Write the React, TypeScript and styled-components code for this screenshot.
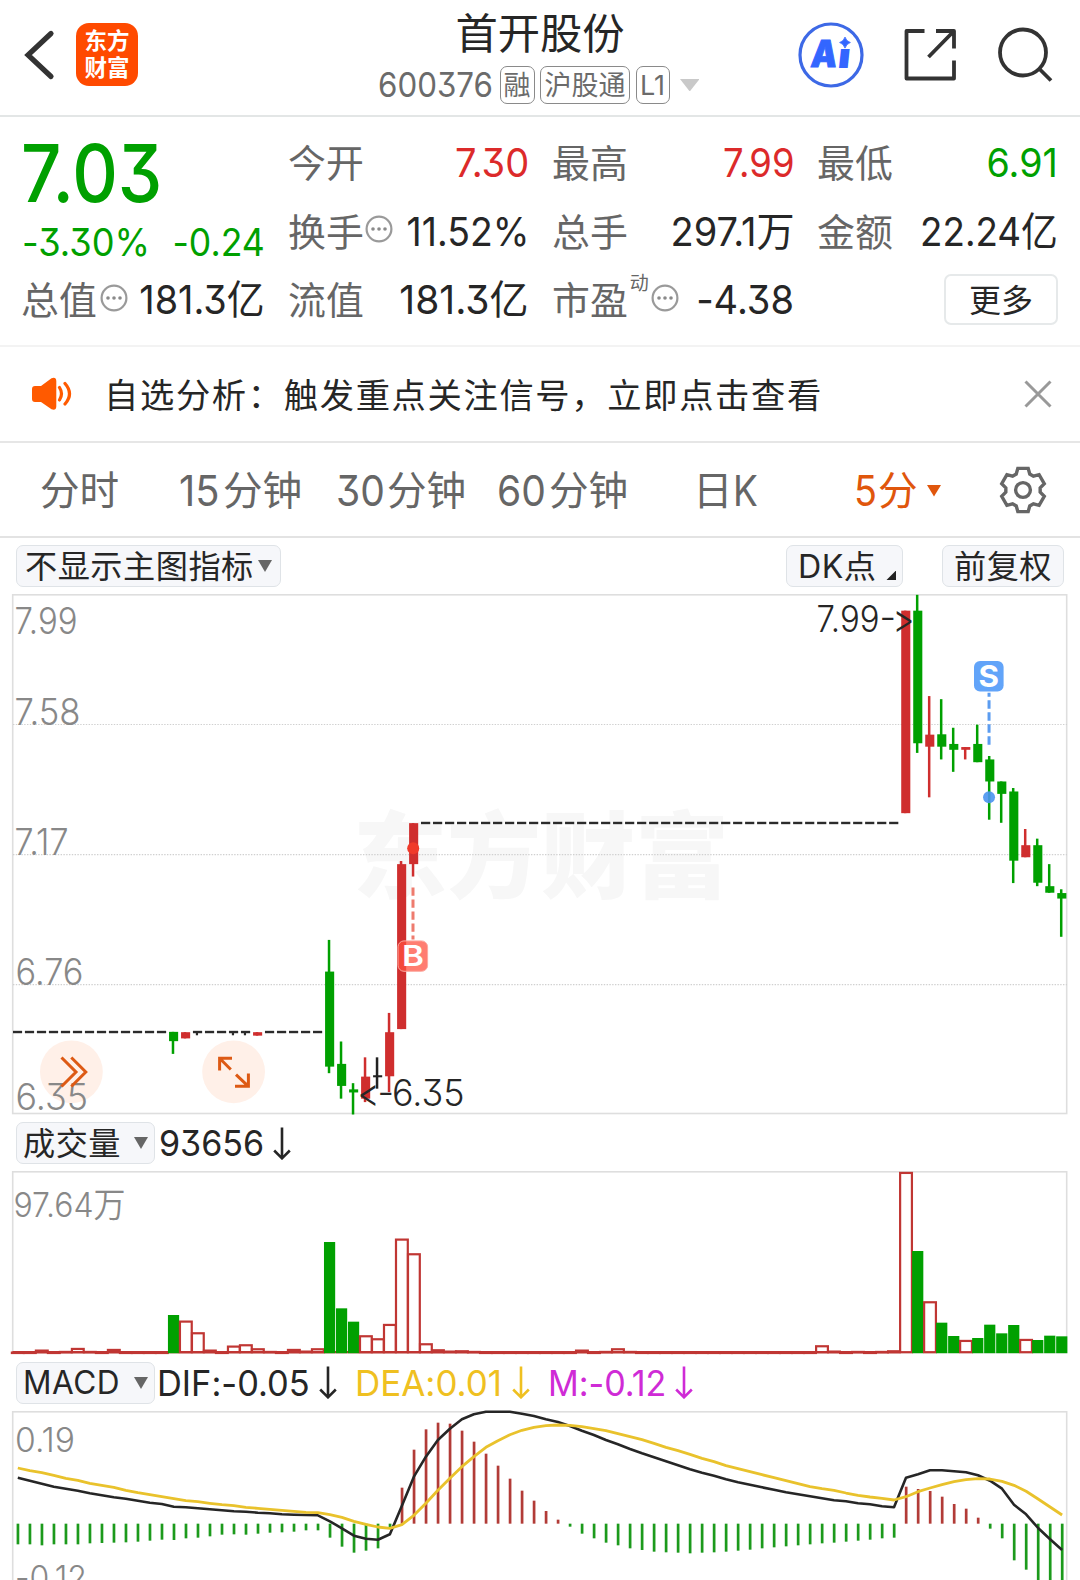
import React from 'react';
import styled, { createGlobalStyle } from 'styled-components';

const GREEN = '#00a000';
const RED = '#dc2a2a';
const CANDLE_RED = '#cf2e2e';
const INK = '#262626';
const FONT = 'Inter, "Noto Sans CJK SC", sans-serif';

const GlobalStyle = createGlobalStyle`
  * { box-sizing: border-box; }
  body {
    margin: 0;
    background: #fff;
    overflow: hidden;
    font-family: ${FONT};
    font-weight: 400;
    font-feature-settings: "cv09", "calt" 0;
    color: ${INK};
  }
  svg { display: block; }
`;

const Page = styled.main`
  width: 1080px;
  height: 1580px;
  overflow: hidden;
  display: flex;
  flex-direction: column;
`;

/* Condensed run of text: drawn narrower than its natural width. */
const Num = styled.span<{ $sx?: number; $w?: number; $right?: boolean }>`
  display: inline-block;
  flex: none;
  white-space: nowrap;
  width: ${(p) => (p.$w ? `${p.$w}px` : 'auto')};
  margin-right: ${(p) => (p.$right ? '-2px' : '0')};
  transform: scaleX(${(p) => p.$sx ?? 0.9});
  transform-origin: ${(p) => (p.$right ? 'right' : 'left')} center;
`;

/* ---------- header ---------- */

const Header = styled.header`
  flex: none;
  height: 117px;
  border-bottom: 2px solid #e3e6e6;
  display: grid;
  grid-template-columns: 378px 324px 1fr;
`;

const HeaderLeft = styled.div`
  height: 109px;
  padding-left: 24px;
  display: flex;
  align-items: center;
  gap: 20px;
`;

const AppLogo = styled.div`
  width: 62px;
  height: 63px;
  border-radius: 13px;
  background: #ff4a00;
  color: #fff;
  font-size: 22.5px;
  font-weight: 700;
  line-height: 27px;
  padding-top: 4px;
  text-align: center;
`;

const HeaderCenter = styled.div`
  display: flex;
  flex-direction: column;
`;

const StockName = styled.h1`
  margin: 0;
  padding-top: 1px;
  height: 66px;
  font-size: 42.3px;
  font-weight: 400;
  line-height: 66px;
  text-align: center;
`;

const CodeRow = styled.div`
  height: 38px;
  display: flex;
  align-items: center;
  color: #6b6b6b;
  font-size: 33.5px;
  line-height: 38px;
`;

const Badge = styled.span<{ $w: number; $gap: number }>`
  width: ${(p) => p.$w}px;
  height: 38px;
  margin-right: ${(p) => p.$gap}px;
  border: 1.5px solid #8a8a8a;
  border-radius: 7px;
  font-size: 27px;
  line-height: 37px;
  text-align: center;
  white-space: nowrap;
`;

const HeaderRight = styled.div`
  height: 109px;
  padding-left: 95px;
  display: flex;
  align-items: center;
  gap: 38px;
`;

/* ---------- quote ---------- */

const Quote = styled.section`
  flex: none;
  height: 230px;
  padding: 12px 24px 0 22px;
  border-bottom: 2px solid #f3f3f3;
  display: grid;
  grid-template-columns: 241px 238px 239px 238px;
  grid-template-rows: repeat(3, 68.5px);
  column-gap: 26px;
`;

const PriceBlock = styled.div`
  grid-row: span 2;
  padding-top: 4px;
  color: ${GREEN};
`;

const Price = styled.div`
  margin-left: -1px;
  font-size: 80px;
  font-weight: 500;
  line-height: 80px;
  height: 80px;
`;

const ChangeRow = styled.div`
  display: flex;
  justify-content: space-between;
  font-size: 38.5px;
  line-height: 58px;
`;

const Cell = styled.div<{ $color?: string }>`
  display: flex;
  align-items: center;
  font-size: 40px;
  line-height: 68px;
  color: ${(p) => p.$color ?? INK};
`;

const Label = styled.span`
  flex: none;
  margin: 0 auto 0 -1px;
  display: flex;
  align-items: center;
  color: #666;
  font-size: 37.9px;
`;

const Sup = styled.sup`
  font-size: 19px;
  line-height: 20px;
  align-self: flex-start;
  margin: 8px -18px 0 2px;
`;

const DotsSvg = styled.svg<{ $shift?: number }>`
  margin: -5px 0 0 ${(p) => p.$shift ?? 1}px;
`;

const MoreButton = styled.button`
  margin: -2px -2px 0 auto;
  width: 114px;
  height: 51px;
  padding: 0;
  border: 2px solid #e6e9ea;
  border-radius: 7px;
  background: #fff;
  color: ${INK};
  font: 400 32px/49px ${FONT};
`;

/* ---------- notice ---------- */

const Notice = styled.section`
  flex: none;
  height: 96px;
  padding: 0 28px 0 31px;
  border-bottom: 2px solid #e6e6e6;
  display: flex;
  align-items: center;
`;

const NoticeText = styled.p`
  margin: 3px auto 0 31px;
  font-size: 34.3px;
  letter-spacing: 1.65px;
  line-height: 90px;
  white-space: nowrap;
`;

/* ---------- tabs ---------- */

const Tabs = styled.nav`
  flex: none;
  height: 95px;
  padding-left: 40px;
  border-bottom: 2px solid #e3e3e3;
  display: grid;
  grid-template-columns: 139px 157px 161px 196px 161px 144px 48px;
  align-items: center;
`;

const Tab = styled.span<{ $active?: boolean }>`
  display: flex;
  align-items: center;
  margin-top: 3px;
  color: ${(p) => (p.$active ? '#e0560c' : '#666')};
  font-size: 39.6px;
  line-height: 90px;
  white-space: nowrap;
`;

const TabDigits = styled(Num)`
  font-size: 42px;
`;

const ChipPad = styled.span`
  width: 9px;
`;

/* ---------- chart bars ---------- */

const Bar = styled.div<{ $h: number; $right?: number }>`
  flex: none;
  height: ${(p) => p.$h}px;
  padding: 0 ${(p) => p.$right ?? 0}px 0 16px;
  display: flex;
  align-items: center;
`;

const Chip = styled.button<{ $w: number; $pad: number; $push?: boolean }>`
  width: ${(p) => p.$w}px;
  height: 42px;
  margin: 0 0 0 ${(p) => (p.$push ? 'auto' : '0')};
  padding: 0 ${(p) => p.$pad}px;
  border: 1.5px solid #dfe3e7;
  border-radius: 7px;
  background: #f6f7fa;
  color: ${INK};
  font: 400 32.2px/40px ${FONT};
  letter-spacing: 0.5px;
  display: flex;
  align-items: center;
  justify-content: space-between;
  white-space: nowrap;
`;

const ChipText = styled.span`
  margin: 2px 0 0 0;
`;

const ChipGap = styled.span`
  width: 39px;
`;

const Corner = styled.svg`
  margin: 18px -5px 0 0;
`;

const Reading = styled.span<{ $color?: string; $ml: number }>`
  display: flex;
  align-items: center;
  margin-top: 2px;
  margin-left: ${(p) => p.$ml}px;
  color: ${(p) => p.$color ?? INK};
  font-size: 35.3px;
  line-height: 42px;
`;

const ArrowSvg = styled.svg<{ $left: number }>`
  margin: -2px 0 0 ${(p) => p.$left}px;
`;

const Panel = styled.svg`
  flex: none;
  width: 1080px;
  overflow: visible;
  font-family: ${FONT};
  font-weight: 360;
`;

/* ---------- small drawings ---------- */

const Dots = ({ shift }: { shift?: number }) => (
  <DotsSvg $shift={shift} width="28" height="28" viewBox="0 0 28 28">
    <circle cx="14" cy="14" r="12.4" fill="none" stroke="#9a9a9a" strokeWidth="2.2" />
    {[8, 14, 20].map((x) => (
      <circle key={x} cx={x} cy="14" r="1.8" fill="#8a8a8a" />
    ))}
  </DotsSvg>
);

const Triangle = ({ w, h, color }: { w: number; h: number; color: string }) => (
  <svg width={w} height={h} viewBox={`0 0 ${w} ${h}`}>
    <path d={`M0 0H${w}L${w / 2} ${h}Z`} fill={color} />
  </svg>
);

const DownArrow = ({ left }: { left: number }) => (
  <ArrowSvg $left={left} width="18" height="33" viewBox="0 0 18 33">
    <path d="M9 0.5V31M1.2 23.5L9 31.3L16.8 23.5" fill="none" stroke="currentColor" strokeWidth="2.6" />
  </ArrowSvg>
);

const gearPath = (() => {
  const pts: string[] = [];
  for (let k = 0; k < 6; k++) {
    for (const [a, r] of [[-23, 17.3], [-13.5, 22.2], [13.5, 22.2], [23, 17.3]]) {
      const t = ((k * 60 + a) * Math.PI) / 180;
      pts.push(`${(25 + r * Math.sin(t)).toFixed(2)} ${(25 - r * Math.cos(t)).toFixed(2)}`);
    }
  }
  return `M${pts.join('L')}Z`;
})();

const Gear = () => (
  <svg width="50" height="50" viewBox="0 0 50 50" fill="none" stroke="#666" strokeWidth="3.4">
    <path d={gearPath} />
    <circle cx="25" cy="25" r="7.4" />
  </svg>
);

/* ---------- chart data ---------- */

const PITCH = 12.003;
const cx = (i: number) => 17.5 + PITCH * i;
const zy = (v: number) => 590 + v / 2.9037;
const vy = (v: number) => 1110 + v / 3;

// [index, colour, high, low, body top, body bottom]
type Candle = [number, string, number, number, number, number];
const G = GREEN;
const R = CANDLE_RED;
const candles: Candle[] = [
  [13, G, 1283, 1347, 1283, 1310],
  [14, R, 1284, 1302, 1284, 1302],
  [20, R, 1284, 1294, 1284, 1294],
  [26, G, 1016, 1403, 1108, 1384],
  [27, G, 1311, 1477, 1376, 1440],
  [28, G, 1432, 1523, 1450, 1459],
  [29, R, 1357, 1487, 1413, 1477],
  [30, '#222', 1357, 1448, 1409, 1415],
  [31, R, 1228, 1458, 1284, 1412],
  [32, R, 787, 1275, 796, 1275],
  [33, R, 677, 832, 677, 796],
  [74, R, 60, 648, 60, 648],
  [75, G, 14, 473, 60, 445],
  [76, R, 308, 602, 420, 455],
  [77, G, 317, 492, 419, 455],
  [78, G, 400, 528, 447, 464],
  [79, R, 456, 492, 456, 464],
  [80, G, 391, 500, 447, 500],
  [81, G, 482, 667, 492, 556],
  [82, G, 556, 676, 556, 592],
  [83, G, 575, 851, 585, 786],
  [84, R, 694, 776, 741, 776],
  [85, G, 722, 860, 741, 850],
  [86, G, 796, 879, 860, 879],
  [87, G, 869, 1007, 880, 896],
];

const range = (a: number, b: number) => Array.from({ length: b - a + 1 }, (_, k) => a + k);
const lowDashes = [...range(0, 12), ...range(15, 19), ...range(21, 25)];
const highDashes = range(34, 73);

const volumeTops: Record<number, number> = {
  2: 720, 4: 724, 5: 715, 6: 724, 8: 718, 13: 615, 14: 633, 15: 668, 16: 720, 18: 708, 19: 704,
  20: 716, 21: 724, 23: 718, 24: 723, 25: 716, 26: 396, 27: 595, 28: 635, 29: 677, 30: 686, 31: 643,
  32: 387, 33: 431, 34: 701, 35: 719, 36: 723, 37: 722, 38: 724, 47: 720, 49: 724, 50: 716, 51: 724,
  67: 707, 68: 723, 70: 724, 72: 724, 73: 722, 74: 187, 75: 423, 76: 575, 77: 638, 78: 678, 79: 691,
  80: 684, 81: 644, 82: 670, 83: 645, 84: 688, 85: 690, 86: 677, 87: 679,
};
const volumeGreen = new Set([13, 26, 27, 28, 75, 77, 78, 80, 81, 82, 83, 85, 86, 87]);

const ZERO = 1241;
const macd = [
  1303, 1303, 1306, 1303, 1303, 1303, 1300, 1299, 1298, 1297, 1295, 1292, 1289, 1290, 1285, 1283, 1279, 1274,
  1273, 1274, 1271, 1268, 1267, 1265, 1261, 1261, 1283, 1310, 1328, 1322, 1315, 1256, 1133, 1019, 958, 938,
  941, 962, 995, 1031, 1067, 1106, 1142, 1172, 1203, 1229, 1250, 1271, 1285, 1298, 1306, 1315, 1320, 1325,
  1327, 1328, 1330, 1328, 1327, 1325, 1322, 1319, 1315, 1312, 1309, 1306, 1303, 1300, 1298, 1295, 1292, 1289,
  1285, 1283, 1130, 1137, 1143, 1160, 1182, 1196, 1223, 1256, 1285, 1351, 1379, 1420, 1440, 1460,
];
const dif = [
  1103, 1112, 1121, 1130, 1136, 1142, 1150, 1156, 1162, 1166, 1172, 1178, 1182, 1190, 1192, 1195, 1198, 1201,
  1204, 1205, 1208, 1210, 1213, 1214, 1215, 1216, 1234, 1255, 1277, 1286, 1289, 1273, 1187, 1100, 1040, 990,
  956, 928, 913, 905, 905, 905, 911, 918, 928, 936, 948, 962, 975, 990, 1003, 1017, 1030, 1042, 1054, 1066,
  1078, 1088, 1097, 1108, 1117, 1124, 1132, 1139, 1147, 1153, 1159, 1165, 1171, 1174, 1180, 1183, 1189, 1192,
  1103, 1093, 1081, 1081, 1084, 1087, 1096, 1112, 1136, 1184, 1213, 1254, 1288, 1320,
];
const dea = [
  1074, 1082, 1088, 1096, 1105, 1111, 1120, 1126, 1132, 1141, 1148, 1154, 1160, 1166, 1172, 1175, 1180, 1184,
  1187, 1192, 1195, 1198, 1201, 1204, 1207, 1208, 1214, 1222, 1234, 1243, 1251, 1255, 1244, 1216, 1180, 1141,
  1105, 1070, 1040, 1012, 992, 974, 961, 952, 947, 945, 946, 950, 956, 962, 971, 980, 989, 1000, 1012, 1022,
  1033, 1045, 1055, 1067, 1076, 1085, 1094, 1103, 1112, 1121, 1130, 1136, 1141, 1149, 1156, 1161, 1165, 1170,
  1160, 1145, 1134, 1124, 1115, 1109, 1106, 1107, 1114, 1126, 1144, 1167, 1191, 1215,
];
const line = (d: number[]) => d.map((v, i) => `${(cx(i) + 0.3).toFixed(1)},${vy(v).toFixed(1)}`).join(' ');

type TxtProps = { x: number; y: number; w: number; size: number; color?: string; children: string; weight?: number };
const Txt = ({ x, y, w, size, color = '#888', children, weight }: TxtProps) => (
  <text x={x} y={y} fontSize={size} fill={color} fontWeight={weight} textLength={w} lengthAdjust="spacingAndGlyphs">
    {children}
  </text>
);

const Frame = ({ top, bottom }: { top: number; bottom: number }) => (
  <rect x="12.7" y={top} width="1054" height={bottom - top} fill="none" stroke="#dedede" strokeWidth="1.6" />
);

/* ---------- panels ---------- */

const PricePanel = () => (
  <Panel height="521" viewBox="0 594 1080 521">
    <text x="353" y="891" fontSize="94" fontWeight="900" fill="#f7f7f7" textLength="376">东方财富</text>
    <Frame top={594.8} bottom={1113.5} />
    {[724.5, 854.6, 984.7].map((y) => (
      <line key={y} x1="13" x2="1067" y1={y} y2={y} stroke="#d0d0d0" strokeWidth="1.2" strokeDasharray="1.4 1.4" />
    ))}
    <circle cx="71.4" cy="1071.8" r="31.4" fill="#fff0e8" />
    <circle cx="233.6" cy="1071.8" r="31.4" fill="#fff0e8" />
    <Txt x={14.5} y={634} w={63} size={37}>7.99</Txt>
    <Txt x={14.5} y={725} w={66} size={37}>7.58</Txt>
    <Txt x={14.5} y={854.6} w={54} size={37}>7.17</Txt>
    <Txt x={15.5} y={984.7} w={68} size={37}>6.76</Txt>
    <Txt x={15.5} y={1110.4} w={72.5} size={37}>6.35</Txt>
    <g fill="none" stroke="#dd5a14" strokeWidth="3">
      <path d="M61.5 1057.5L76 1072L61.5 1086.5M71.3 1057.5L85.8 1072L71.3 1086.5" />
      <path d="M219.6 1070.5V1058.3H232M219.6 1058.3L230.8 1069.5M248.4 1073.6V1086.3H235M248.4 1086.3L236 1074.6" />
    </g>

    {[...lowDashes.map((i) => [i, 1283.5]), ...highDashes.map((i) => [i, 676.5])].map(([i, v]) => (
      <line key={i} x1={Math.max(13, cx(i) - 4.6)} x2={cx(i) + 4.6} y1={zy(v)} y2={zy(v)} stroke="#2b2b2b" strokeWidth="2.4" />
    ))}
    {[15, 18, 19].map((i) => (
      <line key={i} x1={cx(i) - 0.6} x2={cx(i) - 0.6} y1={zy(1283)} y2={zy(1293)} stroke="#2b2b2b" strokeWidth="2.2" />
    ))}
    {candles.map(([i, color, hi, lo, top, bottom]) => (
      <g key={i} fill={color}>
        <rect x={cx(i) - 1.8} y={zy(hi)} width="2.5" height={(lo - hi) / 2.9037} />
        <rect x={cx(i) - 4.5} y={zy(top)} width="9.1" height={(bottom - top) / 2.9037} />
      </g>
    ))}

    <circle cx={cx(33) - 0.4} cy={zy(750)} r="6" fill="#f03a2a" />
    <line x1={cx(33) - 0.6} x2={cx(33) - 0.6} y1={zy(864)} y2={zy(1015)} stroke="#ee7b6e" strokeWidth="3" strokeDasharray="8.3 3.7" />
    <rect x="398" y="940.9" width="29.6" height="30.4" rx="6" fill="#ff4f3f" fillOpacity="0.74" stroke="#fca9a0" strokeWidth="1" />
    <Txt x={402} y={966} w={22} size={28.5} color="#fff" weight={600}>B</Txt>

    <circle cx={cx(81) - 0.7} cy={zy(602)} r="6" fill="#4a94f0" fillOpacity="0.9" />
    <line x1={cx(81) - 0.7} x2={cx(81) - 0.7} y1={zy(449)} y2={zy(298)} stroke="#5b9cf0" strokeWidth="3" strokeDasharray="8.3 3.7" />
    <rect x="974" y="661" width="29.6" height="30.6" rx="6" fill="#62a4f9" />
    <Txt x={978.5} y={686.9} w={20.5} size={30} color="#fff" weight={700}>S</Txt>

    <text y="631.7" fontSize="36.5" fill={INK}>
      <tspan x="816.5" textLength="63" lengthAdjust="spacingAndGlyphs">7.99</tspan>
      <tspan x="879.5" y="629.5">-</tspan>
      <tspan x="892.5" y="632.5" fontSize="40" textLength="22" lengthAdjust="spacingAndGlyphs">&gt;</tspan>
    </text>
    <text fontSize="36.5" fill={INK}>
      <tspan x="357.5" y="1107" fontSize="40" textLength="22" lengthAdjust="spacingAndGlyphs">&lt;</tspan>
      <tspan x="377.5" y="1104.5">-</tspan>
      <tspan x="392" y="1105.5" textLength="72.5" lengthAdjust="spacingAndGlyphs">6.35</tspan>
    </text>
  </Panel>
);

const VolumePanel = () => (
  <Panel height="183" viewBox="0 1171 1080 183">
    <Frame top={1171.8} bottom={1352.6} />
    <Txt x={13.5} y={1216.7} w={112} size={34.5}>97.64万</Txt>
    <line x1="12.5" x2="899" y1="1352.2" y2="1352.2" stroke="#c03633" strokeWidth="2.2" />
    {range(0, 87).map((i) => {
      const top = vy(volumeTops[i] ?? 726);
      if (volumeGreen.has(i)) {
        return <rect key={i} x={cx(i) - 5.6} y={top} width="11.2" height={1353.2 - top} fill={GREEN} />;
      }
      return (
        <rect
          key={i}
          x={cx(i) - 5.6}
          y={top + 0.6}
          width="11.8"
          height={Math.max(0.4, 1351.6 - top)}
          fill="none"
          stroke="#c03633"
          strokeWidth="2.2"
        />
      );
    })}
  </Panel>
);

const MacdPanel = () => (
  <Panel height="169" viewBox="0 1411 1080 169">
    <Frame top={1411.8} bottom={1600} />
    <Txt x={15} y={1451.7} w={60} size={34}>0.19</Txt>
    <Txt x={15} y={1590} w={72} size={34}>-0.12</Txt>
    {macd.map((v, i) => (
      <rect
        key={i}
        x={cx(i) - 0.9}
        y={vy(Math.min(v, ZERO))}
        width="2.7"
        height={Math.abs(v - ZERO) / 3}
        fill={v > ZERO ? '#1c9a1c' : '#b23b37'}
      />
    ))}
    <polyline points={line(dif)} fill="none" stroke="#262626" strokeWidth="2.6" strokeLinejoin="round" />
    <polyline points={line(dea)} fill="none" stroke="#e9c22c" strokeWidth="2.8" strokeLinejoin="round" />
  </Panel>
);

export default function App() {
  return (
    <Page>
      <GlobalStyle />
      <Header>
        <HeaderLeft>
          <svg width="32" height="52" viewBox="0 0 32 52">
            <path d="M27 4.5L4 26L27 47.5" fill="none" stroke="#333" strokeWidth="5.2" strokeLinecap="round" />
          </svg>
          <AppLogo>东方<br />财富</AppLogo>
        </HeaderLeft>
        <HeaderCenter>
          <StockName>首开股份</StockName>
          <CodeRow>
            <Num $w={121.5} $sx={0.935}>600376</Num>
            <Badge $w={35} $gap={5.5}>融</Badge>
            <Badge $w={90} $gap={5.5}>沪股通</Badge>
            <Badge $w={34} $gap={10}>L1</Badge>
            <Triangle w={19.5} h={12.5} color="#c9c9c9" />
          </CodeRow>
        </HeaderCenter>
        <HeaderRight>
          <svg width="68" height="68" viewBox="797 20.5 68 68">
            <circle cx="831" cy="54.5" r="31" fill="none" stroke="#3d69e6" strokeWidth="3.2" />
            <g fill="#3366ff" fontSize="37" fontWeight="900" transform="translate(831 66) skewX(-6)">
              <text x="-21" y="0" textLength="26" lengthAdjust="spacingAndGlyphs" stroke="#3366ff" strokeWidth="1">A</text>
              <text x="6" y="1.5" textLength="13" lengthAdjust="spacingAndGlyphs">i</text>
            </g>
            <rect x="837" y="35" width="16" height="13.5" fill="#fff" />
            <path d="M845 36.6Q846.3 40.9 850.4 42Q846.3 43.3 845 47.6Q843.7 43.3 839.6 42Q843.7 40.9 845 36.6Z" fill="#3366ff" stroke="#3366ff" strokeWidth="0.8" />
          </svg>
          <svg width="54" height="56" viewBox="903 27 54 56" fill="none" stroke="#333" strokeWidth="3.8">
            <path d="M924.5 31H906.5V78.5H954V60.5M936 31H954V48.5M928.5 57L953 32" strokeLinejoin="round" />
          </svg>
          <svg width="58" height="58" viewBox="995.5 25.5 58 58" fill="none" stroke="#333" strokeWidth="3.8">
            <circle cx="1023.5" cy="52" r="23" />
            <path d="M1039.5 68L1051.5 80" />
          </svg>
        </HeaderRight>
      </Header>

      <Quote>
        <PriceBlock>
          <Price><Num $sx={0.885}>7.03</Num></Price>
          <ChangeRow>
            <Num $sx={0.94}>-3.30%</Num>
            <Num $sx={0.925} $right>-0.24</Num>
          </ChangeRow>
        </PriceBlock>
        <Cell $color={RED}><Label>今开</Label><Num $right $sx={0.95}>7.30</Num></Cell>
        <Cell $color={RED}><Label>最高</Label><Num $right $sx={0.91}>7.99</Num></Cell>
        <Cell $color={GREEN}><Label>最低</Label><Num $right $sx={0.94}>6.91</Num></Cell>
        <Cell><Label>换手<Dots /></Label><Num $right $sx={0.935}>11.52%</Num></Cell>
        <Cell><Label>总手</Label><Num $right $sx={0.95}>297.1万</Num></Cell>
        <Cell><Label>金额</Label><Num $right $sx={0.92}>22.24亿</Num></Cell>
        <Cell><Label>总值<Dots shift={3} /></Label><Num $right $sx={0.945}>181.3亿</Num></Cell>
        <Cell><Label>流值</Label><Num $right $sx={0.975}>181.3亿</Num></Cell>
        <Cell><Label>市盈<Sup>动</Sup><Dots shift={20} /></Label><Num $right $sx={0.95}>-4.38</Num></Cell>
        <Cell><MoreButton>更多</MoreButton></Cell>
      </Quote>

      <Notice>
        <svg width="42" height="34" viewBox="31 377 42 34">
          <path d="M35 386H41L51.5 378.3Q56 376.5 56.3 381V406.5Q56 411 51.5 409.3L41 402H35Q32 402 32 399V389Q32 386 35 386Z" fill="#ff5a00" />
          <path d="M59.5 387.5Q63.5 393.7 59.5 400M65 383.5Q74 393.7 65 404" fill="none" stroke="#ff5a00" strokeWidth="3.2" strokeLinecap="round" />
        </svg>
        <NoticeText>自选分析：触发重点关注信号，立即点击查看</NoticeText>
        <svg width="28" height="28" viewBox="0 0 28 28">
          <path d="M1.5 1.5L26.5 26.5M26.5 1.5L1.5 26.5" stroke="#999" strokeWidth="3" />
        </svg>
      </Notice>

      <Tabs>
        <Tab>分时</Tab>
        <Tab><TabDigits $w={44} $sx={0.95}>15</TabDigits>分钟</Tab>
        <Tab><TabDigits $w={51} $sx={0.93}>30</TabDigits>分钟</Tab>
        <Tab><TabDigits $w={52} $sx={0.93}>60</TabDigits>分钟</Tab>
        <Tab>日<TabDigits $sx={0.88}>K</TabDigits></Tab>
        <Tab $active>
          <TabDigits $w={24} $sx={0.9}>5</TabDigits>分<ChipPad /><Triangle w={14} h={11.5} color="#e0560c" />
        </Tab>
        <Gear />
      </Tabs>

      <Bar $h={56} $right={16}>
        <Chip $w={264.5} $pad={8}><ChipText>不显示主图指标</ChipText><Triangle w={14} h={12} color="#666" /></Chip>
        <Chip $w={117} $pad={11} $push>
          <ChipText>DK点</ChipText>
          <Corner width="10.5" height="10.5" viewBox="0 0 10 10"><path d="M10 0V10H0Z" fill="#222" /></Corner>
        </Chip>
        <ChipGap />
        <Chip $w={122} $pad={11}><ChipText>前复权</ChipText></Chip>
      </Bar>
      <PricePanel />

      <Bar $h={56}>
        <Chip $w={138.5} $pad={6}><ChipText>成交量</ChipText><Triangle w={14} h={12} color="#666" /></Chip>
        <Reading $ml={4}><Num $w={111} $sx={0.965}>93656</Num><DownArrow left={3} /></Reading>
      </Bar>
      <VolumePanel />

      <Bar $h={57}>
        <Chip $w={138.5} $pad={6}><Num $w={96} $sx={0.98}>MACD</Num><Triangle w={14} h={12} color="#666" /></Chip>
        <Reading $ml={2}><Num $w={154} $sx={0.975}>DIF:-0.05</Num><DownArrow left={8} /></Reading>
        <Reading $ml={18} $color="#efc021"><Num $w={150} $sx={0.99}>DEA:0.01</Num><DownArrow left={7} /></Reading>
        <Reading $ml={18} $color="#cf2bd6"><Num $w={120} $sx={0.965}>M:-0.12</Num><DownArrow left={7} /></Reading>
      </Bar>
      <MacdPanel />
    </Page>
  );
}
